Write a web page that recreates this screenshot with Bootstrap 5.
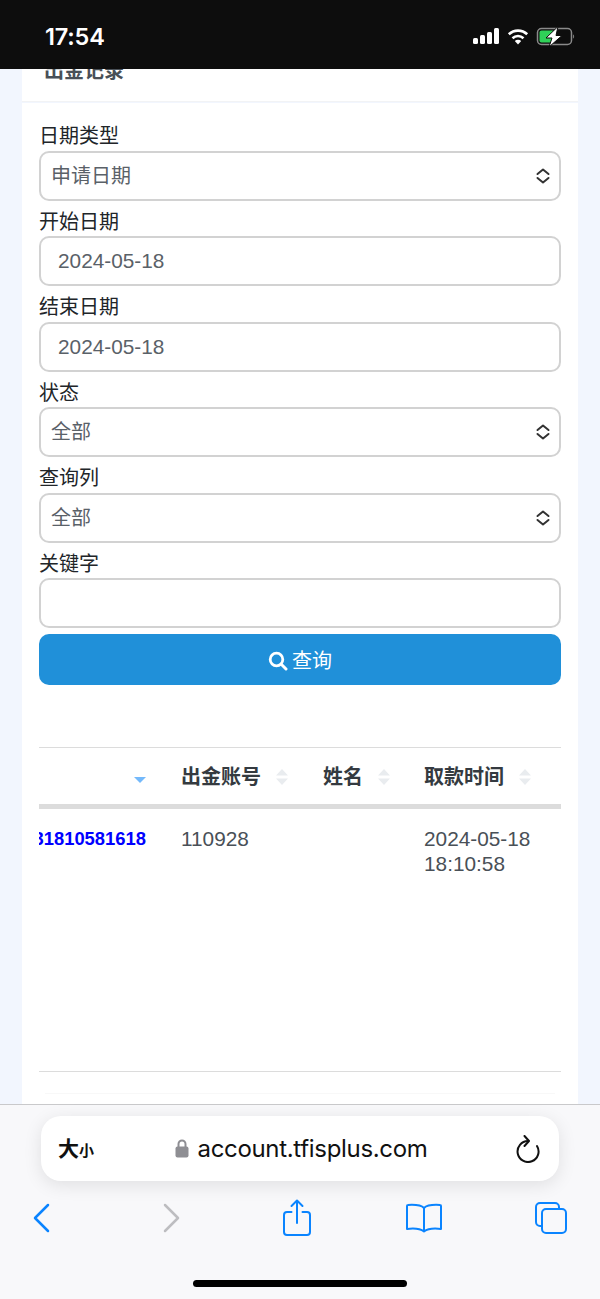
<!DOCTYPE html>
<html lang="zh-CN">
<head>
  <meta charset="UTF-8">
  <meta name="viewport" content="width=device-width, initial-scale=1.0">
  <title>出金记录</title>
  <link href="https://cdn.jsdelivr.net/npm/bootstrap@5.3.0/dist/css/bootstrap.min.css" rel="stylesheet">
  <style>
    html, body { height: 100%; }
    body { font-family: "Liberation Sans", "Noto Sans CJK SC", sans-serif; background: #f2f6fe; overflow: hidden; }
    .phone-shell { height: 1299px; }
    .status-strip { height: 69px; background: #0d0d0d; color: #fff; padding: 5px 24px 0 45px; }
    .status-time { font-family: Inter, sans-serif; font-weight: 600; font-size: 23.5px; letter-spacing: -.2px; }
    .page-scroll { min-height: 0; overflow: hidden; }
    .record-card { margin: 0 22px; background: #fff; border: 0; border-radius: 0; }
    .record-head { height: 60px; margin-top: -27px; padding: 0 22px; line-height: 58px; font-size: 20px; font-weight: 700; color: #495057; background: #fff; border-bottom: 1px solid #f2f3f5; margin-bottom: 1px; }
    .record-body { padding: 18px 17px 40px; }
    .field-label { display: block; margin: 0; padding-top: 1px; font-size: 20px; line-height: 28.5px; color: #212529; }
    .field-box { height: 50px; margin-bottom: 6px; padding: 0 17px; font-size: 20.8px; color: #5a6168; border: 2px solid #d2d2d2; border-radius: 10px; }
    select.field-box { padding: 0 40px 0 10px; font-size: 20px; background-size: 18px 18px; background-position: right 7px center; background-image: url("data:image/svg+xml,%3Csvg xmlns='http://www.w3.org/2000/svg' viewBox='0 0 18 18'%3E%3Cpath fill='none' stroke='%23333' stroke-width='2' stroke-linecap='round' stroke-linejoin='round' d='M3.5 7 9 2.5 14.500 7M3.500 11 9 15.500 14.500 11'/%3E%3C/svg%3E"); }
    .query-btn { height: 51px; padding-top: 8px; font-size: 20px; background: #2090d9; border: 0; border-radius: 10px; }
    .table-wrap { height: 325px; margin-top: 62px; overflow: hidden; border-top: 1.500px solid #dcdcdc; border-bottom: 1.500px solid #dcdcdc; }
    .record-table { table-layout: fixed; width: 693px; margin: 0; border-collapse: collapse; }
    .record-table th { height: 58px; padding: 2px 12px 0; font-size: 20px; font-weight: 700; color: #343a40; white-space: nowrap; border-bottom: 5px solid #dcdcdc; vertical-align: middle; }
    .record-table td { padding: 17px 12px; font-size: 20.8px; line-height: 25.500px; color: #495057; border: 0; vertical-align: top; }
    .record-table td.order-no { padding-right: 23px; text-align: right; font-size: 18.400px; font-weight: 700; color: #0000ff; white-space: nowrap; overflow: hidden; }
    .sort-mark { display: inline-block; width: 12px; height: 18px; margin-left: 15px; vertical-align: -2px; }
    .sort-active { margin-right: 11px; }
    .pager-line { height: 22px; margin: 0 6px; border-bottom: 1px solid #f8f8f8; }
    .safari-bar { height: 195px; flex-shrink: 0; background: #f8f8fa; border-top: 1px solid #c9c9cb; }
    .address-pill { height: 65px; margin: 11px 41px 0; padding: 0 19px 0 17px; background: #fff; border-radius: 20px; box-shadow: 0 4px 18px rgba(0, 0, 0, .1); color: #111; }
    .size-big { font-size: 21px; font-weight: 700; }
    .size-small { font-size: 15px; font-weight: 700; }
    .url-block { padding-right: 7px; }
    .url-text { font-family: Inter, sans-serif; font-size: 24px; letter-spacing: -.32px; }
    .tool-row { height: 48px; margin-top: 13px; padding: 0 17px 0 9px; }
    .tool-slot { width: 64px; }
    .nudge-forward { margin-left: 7px; }
    .nudge-share { margin-left: 2px; }
    .home-bar { width: 214px; height: 7px; margin: 38px auto 0; background: #000; border-radius: 4px; }
  </style>
</head>
<body>
  <div class="phone-shell d-flex flex-column">
    <div class="status-strip d-flex align-items-center justify-content-between flex-shrink-0">
      <span class="status-time">17:54</span>
      <svg width="104" height="20" viewBox="0 0 104 20">
        <g fill="#fff">
          <rect x="1" y="11" width="5" height="6" rx="1.500"/><rect x="8" y="8" width="5" height="9" rx="1.500"/><rect x="15" y="5" width="5" height="12" rx="1.500"/><rect x="22" y="1" width="5" height="16" rx="1.500"/>
          <path d="M46 17.500l-3.200-3.400a4.500 4.500 0 0 1 6.400 0z"/>
        </g>
        <g fill="none" stroke="#fff" stroke-width="2.600">
          <path d="M40.500 11.200a8 8 0 0 1 11 0"/><path d="M36.800 7.300a13.300 13.300 0 0 1 18.400 0"/>
        </g>
        <rect x="65.500" y="1.500" width="34" height="16" rx="4" fill="none" stroke="#8a8a8a" stroke-width="1.500"/>
        <rect x="67.500" y="3.500" width="15" height="12" rx="2" fill="#2fd158"/>
        <path d="M101 7.500c1.500.4 1.500 3.600 0 4z" fill="#777"/>
        <path d="M86 -.5 74 11h6l-3 9L90 8.500h-6z" fill="#fff" stroke="#0d0d0d" stroke-width="1"/>
      </svg>
    </div>

    <div class="page-scroll flex-grow-1">
      <div class="record-card">
        <div class="record-head">出金记录</div>
      </div>
      <div class="card record-card">
        <div class="record-body">
          <form>
            <label class="field-label">日期类型</label>
            <select class="form-select field-box"><option>申请日期</option></select>
            <label class="field-label">开始日期</label>
            <input type="text" class="form-control field-box" value="2024-05-18">
            <label class="field-label">结束日期</label>
            <input type="text" class="form-control field-box" value="2024-05-18">
            <label class="field-label">状态</label>
            <select class="form-select field-box"><option>全部</option></select>
            <label class="field-label">查询列</label>
            <select class="form-select field-box"><option>全部</option></select>
            <label class="field-label">关键字</label>
            <input type="text" class="form-control field-box">
            <button type="button" class="btn btn-primary query-btn w-100 d-flex align-items-center justify-content-center gap-1">
              <svg width="20" height="20" viewBox="0 0 20 20"><circle cx="8.500" cy="8.500" r="6.300" fill="none" stroke="#fff" stroke-width="2.800"/><path d="M13.300 13.300 18 18" stroke="#fff" stroke-width="3" stroke-linecap="round"/></svg>
              <span>查询</span>
            </button>
          </form>

          <div class="table-wrap" id="table-wrap">
            <table class="table record-table">
              <colgroup><col width="300"><col width="142"><col width="101"><col width="150"></colgroup>
              <thead>
                <tr>
                  <th class="text-end">
                    <svg class="sort-mark sort-active" viewBox="0 0 12 18"><path d="M0 9h12l-6 6z" fill="#74b9fb"/></svg>
                  </th>
                  <th>出金账号<svg class="sort-mark" viewBox="0 0 12 18"><path d="M0 7.500 6 1l6 6.500zM0 10.500h12L6 17z" fill="#e9ecef"/></svg></th>
                  <th>姓名<svg class="sort-mark" viewBox="0 0 12 18"><path d="M0 7.500 6 1l6 6.500zM0 10.500h12L6 17z" fill="#e9ecef"/></svg></th>
                  <th>取款时间<svg class="sort-mark" viewBox="0 0 12 18"><path d="M0 7.500 6 1l6 6.500zM0 10.500h12L6 17z" fill="#e9ecef"/></svg></th>
                </tr>
              </thead>
              <tbody>
                <tr>
                  <td class="order-no">2024051831810581618</td>
                  <td>110928</td>
                  <td></td>
                  <td>2024-05-18<br>18:10:58</td>
                </tr>
              </tbody>
            </table>
          </div>
          <div class="pager-line"></div>
        </div>
      </div>
    </div>

    <div class="safari-bar">
      <div class="address-pill d-flex align-items-center">
        <span><span class="size-big">大</span><span class="size-small">小</span></span>
        <span class="url-block flex-grow-1 d-flex align-items-center justify-content-center gap-2">
          <svg width="14" height="19" viewBox="0 0 14 19"><path d="M3.500 8V5a3.500 3.500 0 0 1 7 0v3" fill="none" stroke="#8e8e93" stroke-width="2"/><rect x="0.500" y="7.500" width="13" height="11" rx="2" fill="#8e8e93"/></svg>
          <span class="url-text">account.tfisplus.com</span>
        </span>
        <svg width="24" height="28" viewBox="0 0 24 28"><path d="M12 6a10.500 10.500 0 1 0 9 5" fill="none" stroke="#111" stroke-width="2" stroke-linecap="round"/><path d="M8.500 1 13 6l-4.500 5" fill="none" stroke="#111" stroke-width="2" stroke-linecap="round" stroke-linejoin="round"/></svg>
      </div>
      <div class="tool-row d-flex justify-content-between align-items-center">
        <div class="tool-slot d-flex justify-content-center">
          <svg width="18" height="30" viewBox="0 0 18 30"><path d="M16 2 3 15l13 13" fill="none" stroke="#0a84ff" stroke-width="2.500" stroke-linecap="round" stroke-linejoin="round"/></svg>
        </div>
        <div class="tool-slot d-flex justify-content-center">
          <svg class="nudge-forward" width="18" height="30" viewBox="0 0 18 30"><path d="M2 2l13 13L2 28" fill="none" stroke="#bdbdc0" stroke-width="2.500" stroke-linecap="round" stroke-linejoin="round"/></svg>
        </div>
        <div class="tool-slot d-flex justify-content-center">
          <svg class="nudge-share" width="30" height="38" viewBox="0 0 30 38"><g fill="none" stroke="#0a84ff" stroke-width="2" stroke-linecap="round" stroke-linejoin="round"><path d="M9.500 13H5a3 3 0 0 0-3 3v17a3 3 0 0 0 3 3h20a3 3 0 0 0 3-3V16a3 3 0 0 0-3-3h-4.500"/><path d="M15 24V2"/><path d="M9.500 7 15 1.500 20.500 7"/></g></svg>
        </div>
        <div class="tool-slot d-flex justify-content-center">
          <svg width="36" height="30" viewBox="0 0 36 30"><path d="M18 5C15 2 10 1.500 2 2a1 1 0 0 0-1 1v23c8-1 13-.5 17 2.500 4-3 9-3.500 17-2.500V3a1 1 0 0 0-1-1c-8-.5-13 0-16 3zM18 5v23" fill="none" stroke="#0a84ff" stroke-width="2" stroke-linejoin="round"/></svg>
        </div>
        <div class="tool-slot d-flex justify-content-center">
          <svg width="34" height="34" viewBox="0 0 34 34"><g fill="none" stroke="#0a84ff" stroke-width="2"><path d="M8 25H6a4 4 0 0 1-4-4V6a4 4 0 0 1 4-4h15a4 4 0 0 1 4 4v2"/><rect x="8" y="8" width="24" height="24" rx="4"/></g></svg>
        </div>
      </div>
      <div class="home-bar"></div>
    </div>
  </div>

  <script>
    // tabela rolada para a direita, como na captura
    document.getElementById('table-wrap').scrollLeft = 170;
  </script>
  <script src="https://cdn.jsdelivr.net/npm/bootstrap@5.3.0/dist/js/bootstrap.bundle.min.js"></script>
</body>
</html>
